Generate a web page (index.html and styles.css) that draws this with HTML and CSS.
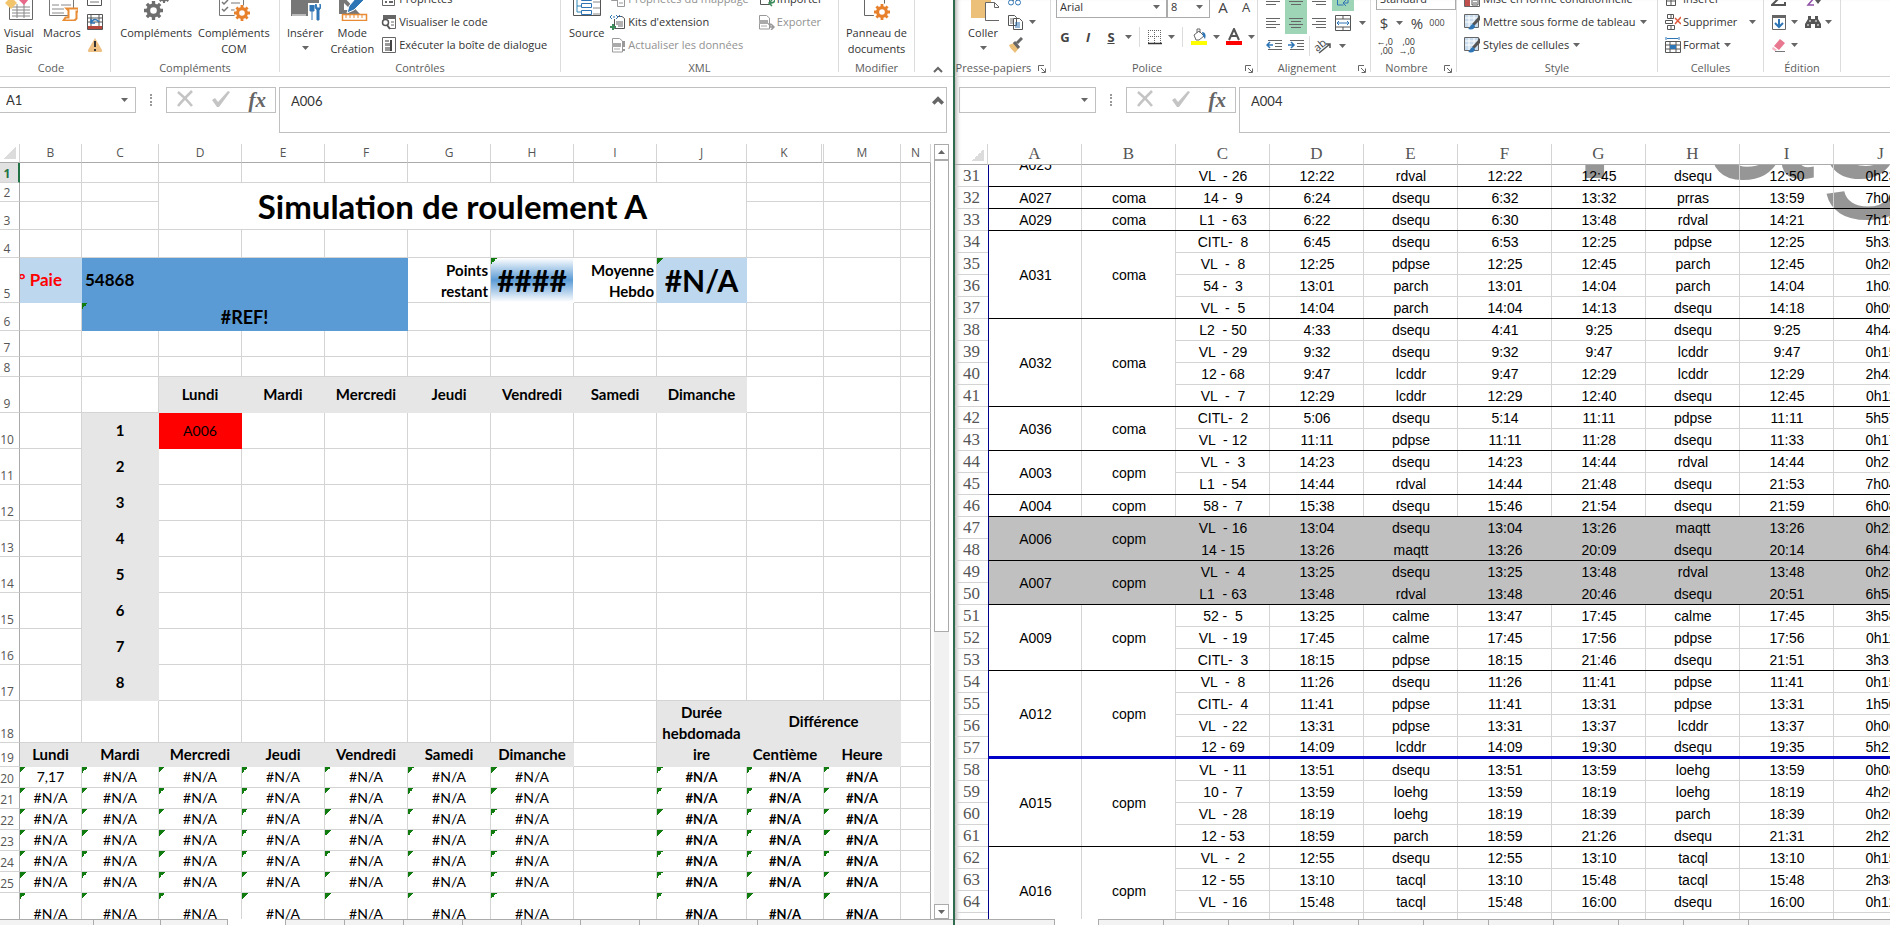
FILE: index.html
```html
<!DOCTYPE html>
<html lang="fr">

<head>
  <meta charset="UTF-8">
  <meta name="viewport" content="width=device-width, initial-scale=1.0">
  <title>Simulation de roulement</title>
  <link rel="stylesheet" href="styles.css">
</head>

<body>
  <svg class="sprite">
    <symbol id="arrow" viewBox="0 0 7 4"><path d="M0 0h7L3.500 4z" fill="#666" /></symbol>
    <symbol id="launcher" viewBox="0 0 8 8"><path d="M.5 6V.5H6M3 3l4 4M7.500 3.500v4h-4" fill="none" stroke="#666" /></symbol>
    <symbol id="cancel" viewBox="0 0 18 18"><path d="M2 2c5 4 10 9 14 14M16 1C11 6 6 11 2 16" fill="none" stroke="#c4c4c4" stroke-width="2.500" /></symbol>
    <symbol id="check" viewBox="0 0 20 18"><path d="M1 10l3-2 3 4L17 1l2 1L8 17H6z" fill="#c4c4c4" /></symbol>
    <symbol id="up" viewBox="0 0 10 7"><path d="M1 6l4-4 4 4" fill="none" stroke="#666" stroke-width="2" /></symbol>
    <symbol id="gear" viewBox="0 0 20 20"><circle cx="10" cy="10" r="5.500" fill="none" stroke="currentColor" stroke-width="4" /><path d="M10 0v4M10 16v4M0 10h4M16 10h4M3 3l3 3M14 14l3 3M17 3l-3 3M6 14l-3 3" stroke="currentColor" stroke-width="3.500" /></symbol>
    <symbol id="lines-left" viewBox="0 0 16 14"><path d="M0 2.500h14M0 5.500h10M0 8.500h14M0 11.500h10" stroke="#666" /></symbol>
    <symbol id="lines-center" viewBox="0 0 16 14"><path d="M1 2.500h14M3 5.500h10M1 8.500h14M3 11.500h10" stroke="#666" /></symbol>
    <symbol id="lines-right" viewBox="0 0 16 14"><path d="M2 2.500h14M6 5.500h10M2 8.500h14M6 11.500h10" stroke="#666" /></symbol>
    <symbol id="xml-doc" viewBox="0 0 16 16"><path d="M2.500 9V1.500h7L12.500 4v11h-10z" fill="#fff" stroke="#999" /><path d="M2 6h9v4H2z" fill="#aaa" /><path d="M4 12h6" stroke="#aaa" /></symbol>
    <symbol id="styles" viewBox="0 0 17 17"><path d="M.5 1.500h14v13H.5z" fill="#c9dced" stroke="#666" /><path d="M1 5h13M1 9h13M5 2v12M10 2v12" stroke="#fff" /><path d="M16 2v5l-6 6-2-2z" fill="#555" /><path d="M9 11l2 2c0 3-3 4-7 3 2-1 2-4 5-5z" fill="#2e75b6" /></symbol>
  </svg>

  <main class="desktop">
    <section class="window window-left">
      <div class="ribbon">
        <div class="group g-code">
          <div class="group-body">
            <button class="big">
              <svg width="32" height="32" viewBox="0 0 32 32"><path d="M6.500 6.500h23v24h-23z" fill="#fff" stroke="#666" /><path d="M9 18h18M9 21h18M9 24h18M9 27h18M14 15v14M21 15v14" stroke="#888" /><path d="M2 14l6-6 6 6-6 6z" fill="#f2c46c" /><path d="M15 10h11l-5 6z" fill="#e8688a" /></svg>
              <span>Visual<br>Basic</span>
            </button>
            <button class="big">
              <svg width="32" height="32" viewBox="0 0 32 32"><path d="M3.500 2.500h24v24h-24z" fill="#fff" stroke="#777" /><path d="M6 16h7M15 16h10M6 20h12M6 24h12" stroke="#888" /><path d="M20.500 19.500h12v3h-2v7l-2 2h-11l2-3h3v-7z" fill="#fff" stroke="#e88b32" stroke-width="2" /></svg>
              <span>Macros<br>&nbsp;</span>
            </button>
            <div class="stack">
              <button class="icon"><svg width="16" height="16" viewBox="0 0 16 16"><path d="M.5.5h14v14H.5z" fill="#fff" stroke="#555" /><path d="M3 11h9M3 6h9" stroke="#777" /></svg></button>
              <button class="icon"><svg width="16" height="16" viewBox="0 0 16 16"><path d="M.5.500h15v15H.5zM4 1v14M1 4h14M1 8h14M12 1v14" fill="#fff" stroke="#555" /><path d="M1 12h14v3H1z" fill="#b5473c" /><path d="M4 9c2-5 6-4 8-1M4 5v4h4" fill="none" stroke="#2e75b6" stroke-width="1.500" /></svg></button>
              <button class="icon"><svg width="16" height="16" viewBox="0 0 16 16"><path d="M8 1l7 12c.5 1 0 2-1 2H2c-1 0-1.500-1-1-2z" fill="#eec083" /><path d="M8 4v6M8 12v2" stroke="#333" stroke-width="2" /></svg></button>
            </div>
          </div>
          <div class="group-label">Code</div>
        </div>

        <div class="group g-addins">
          <div class="group-body">
            <button class="big">
              <svg width="32" height="32" viewBox="0 0 32 32" color="#6e6e6e"><use href="#gear" x="4" y="12" width="19" height="19" /><use href="#gear" x="18" y="2" width="12" height="12" /></svg>
              <span>Compléments<br>&nbsp;</span>
            </button>
            <button class="big">
              <svg width="32" height="32" viewBox="0 0 32 32" color="#e8812c"><path d="M1.500 1.500h24v25h-24z" fill="#fff" stroke="#777" /><path d="M4 13l2 2 4-4M4 20l2 2 4-4" fill="none" stroke="#777" stroke-width="1.500" /><path d="M13 14h9M13 21h5" stroke="#777" /><circle cx="24" cy="24" r="8" fill="#fff" /><use href="#gear" x="16" y="16" width="16" height="16" /></svg>
              <span>Compléments<br>COM</span>
            </button>
          </div>
          <div class="group-label">Compléments</div>
        </div>

        <div class="group g-controls">
          <div class="group-body">
            <button class="big">
              <svg width="32" height="32" viewBox="0 0 32 32"><path d="M2 2h28v25H2z" fill="#777" /><path d="M3 26h14" stroke="#fff" /><path d="M19 14h12v18H19z" fill="#fff" /><path d="M21 16v6h4v-6M23 22v9M27 15c-2 3 0 5 1 6v10h2V21c2-1 2-4 1-6v4h-3z" fill="#2e75b6" stroke="#2e75b6" /></svg>
              <span>Insérer<br><svg class="arrow"><use href="#arrow" /></svg></span>
            </button>
            <button class="big">
              <svg width="32" height="32" viewBox="0 0 32 32"><path d="M3 3v22h21z" fill="#777" /><path d="M8 14v7h7z" fill="#fff" /><path d="M24 4l6 5-12 12-7 3 2-7z" fill="#2e75b6" stroke="#fff" /><path d="M6.500 25.500h24v6h-24z" fill="#fff" stroke="#e88b32" stroke-width="1.500" /><path d="M10 26v3M14 26v3M18 26v3M22 26v3M26 26v3" stroke="#e88b32" /></svg>
              <span>Mode<br>Création</span>
            </button>
            <div class="stack">
              <button class="row"><svg width="16" height="16" viewBox="0 0 16 16"><path d="M1.500 1.500h12v13h-12z" fill="#fff" stroke="#666" /><path d="M4 6h2M8 6h4M4 11h2M8 11h4" stroke="#666" stroke-width="2" /></svg>Propriétés</button>
              <button class="row"><svg width="16" height="16" viewBox="0 0 16 16"><path d="M2.500 6V2.500h12v12H9" fill="#fff" stroke="#666" /><path d="M2 1h13v4H2z" fill="#666" /><path d="M10 8h3M10 11h3" stroke="#666" /><circle cx="4.500" cy="8.500" r="3" fill="#fff" stroke="#555" stroke-width="1.500" /><path d="M6 11l3 4" stroke="#555" stroke-width="2" /></svg>Visualiser le code</button>
              <button class="row"><svg width="16" height="16" viewBox="0 0 16 16"><path d="M1.500.5h13v15h-13z" fill="#fff" stroke="#666" /><path d="M4 3h4v2H4zM4 6h6v3H4zM4 10h6v4H4z" fill="#999" /><path d="M10 3v11" stroke="#444" stroke-width="2" /></svg>Exécuter la boîte de dialogue</button>
            </div>
          </div>
          <div class="group-label">Contrôles</div>
        </div>

        <div class="group g-xml">
          <div class="group-body">
            <button class="big">
              <svg width="32" height="32" viewBox="0 0 32 32"><path d="M2.500 2.500h27v24h-27z" fill="#fff" stroke="#555" /><path d="M22 7h7M22 13h7M22 19h7M22 25h7" stroke="#888" /><path d="M6 3v20h4M6 10h4M6 17h4" fill="none" stroke="#2e86b6" /><path d="M10.500 7.500h10v4h-10zM10.500 14.500h10v4h-10zM10.500 21.500h10v4h-10z" fill="#fff" stroke="#2e75b6" /></svg>
              <span>Source<br>&nbsp;</span>
            </button>
            <div class="stack">
              <button class="row" disabled><svg width="16" height="16" viewBox="0 0 16 16"><path d="M1.500.5h6v9h-6zM7.500 4.500h7v11h-7zM9 8h4M9 12h4" fill="#fff" stroke="#999" /></svg>Propriétés du mappage</button>
              <button class="row"><svg width="16" height="16" viewBox="0 0 16 16"><path d="M4.500 5v9.500h10v-10L12 2.500H8" fill="#fff" stroke="#555" /><path d="M6 8h7M6 10h7M8 12h5" stroke="#666" /><path d="M2 1L0 3l2 2M6 1l2 2-2 2M3 3h2M9 1l2 2" fill="none" stroke="#2e75b6" /><path d="M3 10v6M0 13h6" stroke="#3c8c5c" stroke-width="2" /></svg>Kits d'extension</button>
              <button class="row" disabled><svg width="16" height="16"><use href="#xml-doc" /><path d="M14 4v6M14 12v2" stroke="#999" stroke-width="2" /></svg>Actualiser les données</button>
            </div>
            <div class="stack stack-io">
              <button class="row"><svg width="16" height="16" viewBox="0 0 16 16"><path d="M1.500.5h9v13h-9z" fill="#fff" stroke="#555" /><path d="M1 4h9v5H1z" fill="#2e75b6" /><path d="M16 8c0 4-3 4-6 4m3-3l-3 3 3 3" fill="none" stroke="#3c8c5c" stroke-width="1.500" /></svg>Importer</button>
              <button class="row" disabled><svg width="16" height="16"><use href="#xml-doc" x="-2" /><path d="M9 10h2v3h4m-3-3l3 3-3 3" fill="none" stroke="#999" stroke-width="1.500" /></svg>Exporter</button>
              <span class="row"></span>
            </div>
          </div>
          <div class="group-label">XML</div>
        </div>

        <div class="group g-modify">
          <div class="group-body">
            <button class="big">
              <svg width="32" height="32" viewBox="0 0 32 32" color="#e8812c"><path d="M3.500 2.500h20v24h-20z" fill="#fff" stroke="#666" /><circle cx="21" cy="23" r="9" fill="#fff" /><use href="#gear" x="13" y="15" width="16" height="16" /></svg>
              <span>Panneau de<br>documents</span>
            </button>
          </div>
          <div class="group-label">Modifier</div>
        </div>
        <button class="collapse"><svg width="10" height="7"><use href="#up" /></svg></button>
      </div>

      <div class="formula-bar">
        <div class="name-box"><input type="text" value="A1" aria-label="Zone Nom"><svg class="arrow"><use href="#arrow" /></svg></div>
        <span class="dots"></span>
        <div class="fx-box">
          <button><svg width="18" height="18"><use href="#cancel" /></svg></button>
          <button><svg width="20" height="18"><use href="#check" /></svg></button>
          <button class="fx">fx</button>
        </div>
        <div class="formula"><input type="text" value="A006" aria-label="Barre de formule"><svg width="12" height="9" viewBox="0 0 10 7"><path d="M1 6l4-4 4 4" fill="none" stroke="#666" stroke-width="3" /></svg></div>
      </div>

      <div class="pane">
        <div class="sheet">
          <table class="grid grid-left">
            <colgroup>
              <col class="c-head"><col class="c-b"><col class="c-c"><col class="c-day"><col class="c-day"><col class="c-day"><col class="c-day"><col class="c-day"><col class="c-day"><col class="c-j"><col class="c-c"><col class="c-c"><col class="c-n">
            </colgroup>
            <thead>
              <tr>
                <th class="corner"></th><th>B</th><th>C</th><th>D</th><th>E</th><th>F</th><th>G</th><th>H</th><th>I</th><th>J</th><th class="hidden-next">K</th><th>M</th><th>N</th>
              </tr>
            </thead>
            <tbody>
              <tr class="h20"><th class="active">1</th><td></td><td></td><td></td><td></td><td></td><td></td><td></td><td></td><td></td><td></td><td></td><td></td></tr>
              <tr class="h19"><th>2</th><td></td><td></td><td class="title" colspan="7" rowspan="2">Simulation de roulement A</td><td></td><td></td><td></td></tr>
              <tr class="h28"><th>3</th><td></td><td></td><td></td><td></td><td></td></tr>
              <tr class="h28"><th>4</th><td></td><td></td><td></td><td></td><td></td><td></td><td></td><td></td><td></td><td></td><td></td><td></td></tr>
              <tr class="h45"><th>5</th><td class="pay"><div>N° Paie</div></td><td class="blue pay-number" colspan="4">54868</td><td class="side">Points<br>restant</td><td class="points err">####</td><td class="side">Moyenne<br>Hebdo</td><td class="average err">#N/A</td><td></td><td></td><td></td></tr>
              <tr class="h28"><th>6</th><td></td><td class="blue ref err" colspan="4">#REF!</td><td></td><td></td><td></td><td></td><td></td><td></td><td></td></tr>
              <tr class="h26"><th>7</th><td></td><td></td><td></td><td></td><td></td><td></td><td></td><td></td><td></td><td></td><td></td><td></td></tr>
              <tr class="h20"><th>8</th><td></td><td></td><td></td><td></td><td></td><td></td><td></td><td></td><td></td><td></td><td></td><td></td></tr>
              <tr class="h36"><th>9</th><td></td><td></td><td class="label">Lundi</td><td class="label">Mardi</td><td class="label">Mercredi</td><td class="label">Jeudi</td><td class="label">Vendredi</td><td class="label">Samedi</td><td class="label">Dimanche</td><td></td><td></td><td></td></tr>
            </tbody>
            <tbody id="weeks"></tbody>
            <tbody>
              <tr class="h42"><th>18</th><td></td><td></td><td></td><td></td><td></td><td></td><td></td><td></td><td class="label" rowspan="2">Durée<br>hebdomada<br>ire</td><td class="label" colspan="2">Différence</td><td></td></tr>
              <tr class="h24"><th>19</th><td class="label">Lundi</td><td class="label">Mardi</td><td class="label">Mercredi</td><td class="label">Jeudi</td><td class="label">Vendredi</td><td class="label">Samedi</td><td class="label">Dimanche</td><td></td><td class="label">Centième</td><td class="label">Heure</td><td></td></tr>
            </tbody>
            <tbody id="totals"></tbody>
          </table>
        </div>
        <div class="scrollbar">
          <button class="scroll-up"><svg class="arrow"><use href="#arrow" /></svg></button>
          <div class="thumb"></div>
          <button><svg class="arrow"><use href="#arrow" /></svg></button>
        </div>
      </div>
      <div class="tabs tabs-left">
        <span class="first"></span><span></span><span></span><span class="current"></span><span></span><span></span><span></span><span></span><span></span><span></span><span></span><span></span>
      </div>
    </section>

    <section class="window window-right">
      <div class="ribbon">
        <div class="group g-clipboard">
          <div class="group-body">
            <button class="big">
              <svg width="32" height="32" viewBox="0 0 32 32"><path d="M4 2h20v27H4z" fill="#edc079" /><path d="M18.500 13.500h9l5 5v13h-14z" fill="#fff" stroke="#666" /><path d="M27.500 13.500v5h5" fill="none" stroke="#666" /></svg>
              <span>Coller<br><svg class="arrow"><use href="#arrow" /></svg></span>
            </button>
            <div class="stack">
              <button class="icon"><svg width="16" height="16" viewBox="0 0 16 16"><path d="M5 0l5 10M11 0L6 10" stroke="#555" /><circle cx="4" cy="11.500" r="2.500" fill="none" stroke="#2e75b6" /><circle cx="11" cy="11.500" r="2.500" fill="none" stroke="#2e75b6" /></svg></button>
              <button class="icon"><svg width="16" height="16" viewBox="0 0 16 16"><path d="M1.500 1.500h6l2 2v8h-8zM6.500 4.500h6l3 3v8h-9z" fill="#fff" stroke="#555" /><path d="M3 5h3M3 7h3M3 9h3" stroke="#777" /><path d="M8 9h5M8 11h5M8 13h5" stroke="#2e75b6" /></svg><svg class="arrow"><use href="#arrow" /></svg></button>
              <button class="icon"><svg width="16" height="16" viewBox="0 0 16 16"><path d="M2 8l5-2 5 5-4 5C6 13 4 13 2 8z" fill="#edc079" /><path d="M15 1l-5 5M7 5l5 6" stroke="#666" stroke-width="3" /></svg></button>
            </div>
          </div>
          <div class="group-label">Presse-papiers<svg class="launcher"><use href="#launcher" /></svg></div>
        </div>

        <div class="group g-font">
          <div class="group-body lines">
            <div class="line">
              <label class="combo combo-font"><select aria-label="Police"><option>Arial</option></select><svg class="arrow"><use href="#arrow" /></svg></label>
              <label class="combo combo-size"><select aria-label="Taille"><option>8</option></select><svg class="arrow"><use href="#arrow" /></svg></label>
              <button class="letter grow">A</button>
              <button class="letter shrink">A</button>
            </div>
            <div class="line line-style">
              <button class="letter wide"><b>G</b></button>
              <button class="letter wide"><b><em>I</em></b></button>
              <button class="letter wide"><b><u>S</u></b></button>
              <svg class="arrow"><use href="#arrow" /></svg>
              <i class="sep"></i>
              <button class="tool"><svg width="16" height="16" viewBox="0 0 16 16"><path d="M1 1.500h13M1 7.500h13M1.500 1v13M7.500 1v13M13.500 1v13" stroke="#666" stroke-dasharray="1 1" /><path d="M1 14.500h14" stroke="#333" stroke-width="1.500" /></svg></button>
              <svg class="arrow"><use href="#arrow" /></svg>
              <i class="sep"></i>
              <button class="tool"><svg width="18" height="18" viewBox="0 0 18 18"><path d="M4 7l5-4 5 5-5 4H6z" fill="#fff" stroke="#666" /><path d="M7 5V1h3v4" fill="none" stroke="#666" /><path d="M12 4c4 0 4 4 3 7l-2-3z" fill="#2e75b6" /><path d="M1 13h16v4H1z" fill="#ff0" /></svg></button>
              <svg class="arrow"><use href="#arrow" /></svg>
              <button class="tool"><svg width="18" height="18" viewBox="0 0 18 18"><path d="M4 12l5-11 5 11M6 8h6" fill="none" stroke="#555" stroke-width="2" /><path d="M1 13h16v4H1z" fill="red" /></svg></button>
              <svg class="arrow"><use href="#arrow" /></svg>
            </div>
          </div>
          <div class="group-label">Police<svg class="launcher"><use href="#launcher" /></svg></div>
        </div>

        <div class="group g-align">
          <div class="group-body lines">
            <div class="line">
              <button class="tool"><svg width="16" height="14"><use href="#lines-left" /></svg></button>
              <button class="tool on"><svg width="16" height="14"><use href="#lines-center" /></svg></button>
              <button class="tool"><svg width="16" height="14"><use href="#lines-right" /></svg></button>
              <button class="tool on wrap"><svg width="16" height="16" viewBox="0 0 16 16"><path d="M2.500 1v12h6M2 6h8M13 5v6H8m3-3l-3 3 3 3" fill="none" stroke="#2e75b6" /></svg></button>
            </div>
            <div class="line">
              <button class="tool"><svg width="16" height="14"><use href="#lines-left" /></svg></button>
              <button class="tool on"><svg width="16" height="14"><use href="#lines-center" /></svg></button>
              <button class="tool"><svg width="16" height="14"><use href="#lines-right" /></svg></button>
              <button class="tool wrap"><svg width="16" height="16" viewBox="0 0 16 16"><path d="M.5.500h15v15H.5zM.5 4h15M.5 12h15M8 1v3M8 12v4" fill="#fff" stroke="#555" /><path d="M2 8h12M4 6L2 8l2 2M12 6l2 2-2 2" fill="none" stroke="#2e75b6" /></svg></button>
              <svg class="arrow"><use href="#arrow" /></svg>
            </div>
            <div class="line">
              <button class="tool"><svg width="16" height="14" viewBox="0 0 16 14"><path d="M2 1.500h14M9 4.500h7M9 7.500h7M2 10.500h14" stroke="#666" /><path d="M7 6H1m3-3L1 6l3 3" fill="none" stroke="#2e75b6" stroke-width="1.500" /></svg></button>
              <button class="tool"><svg width="16" height="14" viewBox="0 0 16 14"><path d="M2 1.500h14M9 4.500h7M9 7.500h7M2 10.500h14" stroke="#666" /><path d="M0 6h6M3 3l3 3-3 3" fill="none" stroke="#2e75b6" stroke-width="1.500" /></svg></button>
              <i class="sep"></i>
              <button class="tool"><svg width="18" height="16" viewBox="0 0 18 16"><path d="M5 15L16 6m-4 0h4v4" fill="none" stroke="#555" stroke-width="1.500" /><text x="0" y="11" font-size="11" fill="#444" transform="rotate(-40 6 8)">ab</text></svg></button>
              <svg class="arrow"><use href="#arrow" /></svg>
            </div>
          </div>
          <div class="group-label">Alignement<svg class="launcher"><use href="#launcher" /></svg></div>
        </div>

        <div class="group g-number">
          <div class="group-body lines">
            <div class="line">
              <label class="combo combo-format"><select aria-label="Format de nombre"><option>Standard</option></select></label>
            </div>
            <div class="line">
              <button class="letter sign">$</button><svg class="arrow"><use href="#arrow" /></svg>
              <button class="letter sign">%</button>
              <button class="letter thousand">000</button>
            </div>
            <div class="line line-decimals">
              <button class="decimals"><span>←,0</span><span>,00</span></button>
              <button class="decimals"><span>,00</span><span>→,0</span></button>
            </div>
          </div>
          <div class="group-label">Nombre<svg class="launcher"><use href="#launcher" /></svg></div>
        </div>

        <div class="group g-style">
          <div class="group-body">
            <div class="stack">
              <button class="row"><svg width="17" height="16" viewBox="0 0 17 16"><path d="M.5.5h15v15H.5z" fill="#fff" stroke="#666" /><path d="M1 3h5v12H1z" fill="#c0504d" /><path d="M8 6h6v8H8z" fill="#fff" stroke="#555" /><path d="M9 9h4M9 12h4" stroke="#555" /></svg>Mise en forme conditionnelle</button>
              <button class="row"><svg width="17" height="17"><use href="#styles" /></svg>Mettre sous forme de tableau<svg class="arrow"><use href="#arrow" /></svg></button>
              <button class="row"><svg width="17" height="17"><use href="#styles" /></svg>Styles de cellules<svg class="arrow"><use href="#arrow" /></svg></button>
            </div>
          </div>
          <div class="group-label">Style</div>
        </div>

        <div class="group g-cells">
          <div class="group-body">
            <div class="stack">
              <button class="row"><svg width="16" height="16" viewBox="0 0 16 16"><path d="M1.500 1.500h9v13h-9zM6 2v12M2 6h8M2 10h8" fill="none" stroke="#555" /></svg>Insérer</button>
              <button class="row"><svg width="16" height="16" viewBox="0 0 16 16"><path d="M2.500.5h6v4h-6zM.5 6.500h7v3h-7zM2.500 11.500h7v4h-7zM6 1v3M6 12v3" fill="none" stroke="#555" /><path d="M10 4l6 6M16 3l-6 7" stroke="#e0583c" stroke-width="1.500" /></svg>Supprimer<svg class="arrow arrow-far"><use href="#arrow" /></svg></button>
              <button class="row"><svg width="16" height="16" viewBox="0 0 16 16"><path d="M2 1.500h11M1 0v3M14 0v3" stroke="#2e75b6" /><path d="M.5 4.500h15v11H.5zM5 5v10M11 5v10M1 8h14M1 12h14" fill="#fff" stroke="#555" /><path d="M5 8h6v4H5z" fill="#2e75b6" /></svg>Format<svg class="arrow"><use href="#arrow" /></svg></button>
            </div>
          </div>
          <div class="group-label">Cellules</div>
        </div>

        <div class="group g-edit">
          <div class="group-body">
            <div class="stack">
              <button class="row"><svg width="16" height="16" viewBox="0 0 16 16"><path d="M14 3V1H1l7 6-7 7h13v-3" fill="none" stroke="#555" stroke-width="2" /></svg></button>
              <button class="row"><svg width="16" height="16" viewBox="0 0 16 16"><path d="M1.500 1.500h13v14h-13z" fill="#fff" stroke="#666" /><path d="M1 1h14v3H1z" fill="#666" /><path d="M8 5v8M4 9l4 4 4-4" fill="none" stroke="#2e75b6" stroke-width="2" /></svg><svg class="arrow"><use href="#arrow" /></svg></button>
              <button class="row"><svg width="16" height="16" viewBox="0 0 16 16"><path d="M9 2l5 4-6 7-5-4z" fill="#e8788f" /><path d="M2 10l4 3-2 1-3-2z" fill="#f3b3c0" /><path d="M4 14.500h10" stroke="#777" /></svg><svg class="arrow"><use href="#arrow" /></svg></button>
            </div>
            <div class="stack">
              <button class="row"><svg width="16" height="16" viewBox="0 0 16 16"><path d="M3 7h6l-6 7h6" fill="none" stroke="#8e4fa8" stroke-width="1.500" /><path d="M10 9h6l-3 4z" fill="#555" /></svg></button>
              <button class="row"><svg width="16" height="16" viewBox="0 0 16 16"><path d="M3 2h3v3h4V2h3v3l3 5v4h-6v-4H6v4H0v-4l3-5z" fill="#555" /><path d="M2 11h2M12 11h2M5 6v2M11 6v2" stroke="#fff" /></svg><svg class="arrow"><use href="#arrow" /></svg></button>
              <span class="row"></span>
            </div>
          </div>
          <div class="group-label">Édition</div>
        </div>
      </div>

      <div class="formula-bar">
        <div class="name-box"><input type="text" value="" aria-label="Zone Nom"><svg class="arrow"><use href="#arrow" /></svg></div>
        <span class="dots"></span>
        <div class="fx-box">
          <button><svg width="18" height="18"><use href="#cancel" /></svg></button>
          <button><svg width="20" height="18"><use href="#check" /></svg></button>
          <button class="fx">fx</button>
        </div>
        <div class="formula"><input type="text" value="A004" aria-label="Barre de formule"></div>
      </div>

      <div class="pane">
        <div class="sheet">
          <div class="page-mark"><span>Page</span></div>
          <table class="grid grid-right">
            <colgroup>
              <col class="c-head"><col span="10" class="c-cell">
            </colgroup>
            <thead>
              <tr>
                <th class="corner"></th><th>A</th><th>B</th><th>C</th><th>D</th><th>E</th><th>F</th><th>G</th><th>H</th><th>I</th><th>J</th>
              </tr>
            </thead>
            <tbody id="services"></tbody>
          </table>
        </div>
      </div>
      <div class="tabs tabs-right">
        <span class="first"></span><span class="current"></span><span></span><span></span><span></span><span></span><span></span><span></span><span></span><span></span><span></span><span></span>
      </div>
    </section>
  </main>
  <script src="script.js"></script>
</body>

</html>
```
FILE: styles.css
```css
* {
  margin: 0;
  padding: 0;
  box-sizing: border-box;
}

html,
body {
  width: 100%;
  height: 100%;
  overflow: hidden;
}

body {
  font-family: "Open Sans", "Noto Sans", sans-serif;
  font-size: 11px;
  color: #333;
  background: #fff;
}

button,
input,
select {
  font: inherit;
  color: inherit;
  background: none;
  border: none;
  outline: none;
  appearance: none;
}

svg {
  flex: none;
}

.sprite {
  position: absolute;
  width: 0;
  height: 0;
}

.arrow {
  width: 7px;
  height: 4px;
}

.desktop {
  display: grid;
  grid-template-columns: 955fr 935fr;
  height: 100%;
}

.window {
  display: flex;
  flex-direction: column;
  min-width: 0;
  height: 100%;
  overflow: hidden;
}

.window-left {
  border-right: 2px solid #2f6b4c;
}

.window-right {
  box-shadow: inset 5px 0 5px -4px #999;
}

/* ribbon */
.ribbon {
  display: flex;
  flex: none;
  height: 77px;
  border-bottom: 1px solid #d2d2d2;
  overflow: hidden;
}

.group {
  display: flex;
  flex: none;
  flex-direction: column;
  justify-content: flex-end;
  height: 72px;
  border-right: 1px solid #dcdcdc;
}

.group-body {
  display: flex;
  flex: none;
  align-items: flex-end;
}

.group-label {
  position: relative;
  flex: none;
  height: 15px;
  line-height: 22px;
  text-align: center;
  color: #5c5c5c;
}

.launcher {
  position: absolute;
  right: 4px;
  top: 8px;
  width: 8px;
  height: 8px;
}

.big {
  display: flex;
  flex-direction: column;
  align-items: center;
  gap: 4px;
  line-height: 16px;
  white-space: nowrap;
}

.big .arrow {
  vertical-align: 3px;
}

.stack {
  display: flex;
  flex-direction: column;
  padding-bottom: 1px;
}

.row,
.icon {
  display: flex;
  align-items: center;
  height: 23px;
  gap: 2px;
  white-space: nowrap;
}

.row:disabled {
  color: #929292;
}

.row .arrow {
  margin-left: 2px;
}

.row .arrow-far {
  margin-left: 10px;
}

.g-code {
  width: 111px;
}

.g-code .group-body {
  gap: 8px;
  padding-left: 3px;
}

.g-code .stack {
  margin-left: -2px;
}

.g-code .group-label {
  padding-right: 8px;
}

.g-addins {
  width: 169px;
}

.g-addins .group-body {
  gap: 6px;
  justify-content: center;
}

.g-controls {
  width: 281px;
}

.g-controls .group-body {
  gap: 7px;
  padding-left: 7px;
}

.g-xml {
  width: 278px;
}

.g-xml .group-body {
  gap: 6px;
  padding-left: 8px;
}

.g-xml .stack-io {
  margin-left: 4px;
}

.g-modify {
  width: 76px;
}

.g-modify .group-body {
  justify-content: center;
}

.collapse {
  margin: 60px 0 0 18px;
  height: 16px;
}

.g-clipboard {
  width: 96px;
}

.g-clipboard .group-body {
  gap: 8px;
  padding-left: 12px;
}

.g-clipboard .icon {
  gap: 6px;
}

.g-clipboard .group-label {
  padding-right: 18px;
}

.g-font {
  width: 207px;
}

.g-align {
  width: 113px;
}

.g-number {
  width: 86px;
}

.g-font .group-label,
.g-align .group-label,
.g-number .group-label {
  padding-right: 14px;
}

.g-style {
  width: 201px;
}

.g-cells {
  width: 106px;
}

.g-edit {
  width: 77px;
}

.g-style .group-body,
.g-cells .group-body,
.g-edit .group-body {
  padding-left: 7px;
}

.g-edit .group-body {
  gap: 7px;
}

.lines {
  flex-direction: column;
  align-items: flex-start;
  padding-left: 5px;
}

.line {
  display: flex;
  align-items: center;
  height: 23px;
}

.g-font .line:first-child {
  margin-bottom: 7px;
}

.line-style {
  gap: 5px;
  margin-bottom: 9px;
}

.combo {
  display: flex;
  align-items: center;
  height: 23px;
  padding: 0 6px 0 3px;
  border: 1px solid #ababab;
}

.combo select {
  flex: 1;
  min-width: 0;
}

.combo-font {
  width: 111px;
}

.combo-size {
  width: 43px;
}

.combo-format {
  width: 80px;
  margin-bottom: 2px;
}

.letter {
  width: 16px;
  font-size: 13px;
  color: #444;
}

.wide {
  width: 18px;
}

.grow {
  width: 26px;
  font-size: 15px;
}

.shrink {
  width: 20px;
}

.sep {
  width: 1px;
  height: 20px;
  margin: 0 2px;
  background: #dcdcdc;
}

.tool {
  display: flex;
  align-items: center;
  justify-content: center;
  height: 23px;
}

.g-align .tool {
  width: 22px;
}

.g-align .on {
  background: #9fd5b7;
}

.g-align .wrap {
  margin-left: 3px;
}

.g-align .arrow {
  margin-left: 5px;
}

.g-number .arrow {
  margin: 0 6px 0 4px;
}

.sign {
  font-size: 15px;
}

.thousand {
  width: 24px;
  font-size: 9px;
}

.line-decimals {
  gap: 5px;
}

.decimals {
  display: flex;
  flex-direction: column;
  align-items: flex-end;
  width: 17px;
  font-size: 9px;
  line-height: 9px;
}

/* formula bar */
.formula-bar {
  display: flex;
  flex: none;
  align-items: flex-start;
  height: 67px;
  padding-top: 10px;
  font-family: Lato, sans-serif;
  font-size: 13px;
}

.name-box {
  display: flex;
  align-items: center;
  width: 136px;
  height: 26px;
  padding: 0 7px 0 6px;
  border: 1px solid #c0c0c0;
}

.window-left .name-box {
  border-left: none;
}

.window-right .name-box {
  width: 137px;
  margin-left: 4px;
}

.name-box input,
.formula input {
  flex: 1;
  min-width: 0;
  height: 25px;
}

.dots {
  width: 2px;
  height: 12px;
  margin: 7px 14px 0;
  border-right: 2px dotted #999;
}

.fx-box {
  display: flex;
  align-items: center;
  justify-content: space-between;
  width: 110px;
  height: 26px;
  padding: 0 9px;
  border: 1px solid #c0c0c0;
}

.fx {
  font: italic bold 21px/20px "Liberation Serif", serif;
  color: #666;
}

.formula {
  display: flex;
  flex: 1;
  align-items: flex-start;
  min-width: 0;
  height: 46px;
  margin: 0 6px 0 3px;
  padding: 0 2px 0 11px;
  border: 1px solid #c0c0c0;
}

.formula svg {
  margin-top: 8px;
}

.window-right .formula {
  margin-right: 0;
  border-right: none;
}

/* sheets */
.pane {
  display: flex;
  flex: 1;
  min-height: 0;
}

.sheet {
  position: relative;
  min-width: 0;
  overflow: hidden;
}

.grid {
  position: relative;
  table-layout: fixed;
  border-collapse: separate;
  border-spacing: 0;
}

.grid td {
  border-right: 1px solid #d4d4d4;
  border-bottom: 1px solid #d4d4d4;
  text-align: center;
  vertical-align: middle;
  white-space: nowrap;
}

.grid th {
  font-weight: normal;
  color: #555;
  border-bottom: 1px solid #d4d4d4;
}

.grid thead th {
  border-right: 1px solid #d4d4d4;
  border-bottom: 1px solid #ababab;
}

.grid thead .corner {
  background: linear-gradient(to bottom right, transparent 50%, #dcdcdc 50%) no-repeat right 3px bottom 3px / 12px 12px;
}

.grid-left {
  width: 931px;
  font: 14px/20px Lato, sans-serif;
  color: #000;
}

.grid-left .c-head { width: 20px; }
.grid-left .c-b { width: 62px; }
.grid-left .c-c { width: 77px; }
.grid-left .c-day { width: 83px; }
.grid-left .c-j { width: 90px; }
.grid-left .c-n { width: 30px; }

.grid-left thead th {
  height: 19px;
}

.grid-left th {
  font: 12px/16px "Open Sans", sans-serif;
}

.grid-left tbody th {
  padding-right: 5px;
  border-right: 1px solid #ababab;
  vertical-align: bottom;
}

.grid-left td:last-child {
  border-right-color: #ababab;
}

.grid-left thead .hidden-next {
  border-right: 3px double #d4d4d4;
}

.grid-left tbody .active {
  padding-right: 4px;
  font-weight: bold;
  color: #217346;
  background: #e1e1e1;
  border-right: 2px solid #217346;
}

.h19 { height: 19px; }
.h20 { height: 20px; }
.h21 { height: 21px; }
.h24 { height: 24px; }
.h26 { height: 26px; }
.h28 { height: 28px; }
.h36 { height: 36px; }
.h42 { height: 42px; }
.h45 { height: 45px; }

.grid-left .title {
  font-size: 33px;
  line-height: 40px;
  font-weight: bold;
}

.grid-left .pay {
  background: #bdd7ee;
  border-color: #bdd7ee;
}

.pay div {
  display: flex;
  justify-content: flex-end;
  padding-right: 19px;
  overflow: hidden;
  font-size: 17px;
  font-weight: bold;
  color: red;
}

.grid-left .blue {
  background-color: #5b9bd5;
  border-color: #5b9bd5;
  font-weight: bold;
}

.grid-left .pay-number {
  padding-left: 3px;
  font-size: 17px;
  text-align: left;
}

.grid-left .ref {
  font-size: 18px;
}

.grid-left .side {
  padding: 2px 2px 0 0;
  font-size: 15px;
  line-height: 21px;
  font-weight: bold;
  text-align: right;
}

.grid-left .points,
.grid-left .average {
  font-size: 30px;
  line-height: 40px;
  font-weight: bold;
}

.grid-left .points {
  background-image: linear-gradient(to bottom right, #107c10 50%, transparent 50%), linear-gradient(#fff, #5b9bd5 50%, #fff);
  background-size: 6px 6px, auto;
  border-color: transparent;
}

.grid-left .average {
  background-color: #bdd7ee;
  border-color: #bdd7ee;
}

.grid-left .label {
  font-size: 15px;
  line-height: 21px;
  font-weight: bold;
  background: #e7e6e6;
  border-color: #e7e6e6;
}

.grid-left .conflict {
  background: red;
  border-color: red;
}

.grid-left .sum {
  font-size: 13px;
  font-weight: bold;
}

/* small green corner on cells holding an error */
.err {
  background-image: linear-gradient(to bottom right, #107c10 50%, transparent 50%);
  background-repeat: no-repeat;
  background-size: 6px 6px;
}

.grid-right {
  width: 973px;
  font: 14px/16px "Liberation Sans", sans-serif;
  color: #000;
}

.grid-right .c-head { width: 33px; }
.grid-right .c-cell { width: 94px; }

.grid-right th {
  font: 17px/20px "Liberation Serif", serif;
}

.grid-right thead th {
  height: 21px;
}

.grid-right tbody tr {
  height: 22px;
}

/* column lines are backgrounds here, so the black row lines stay unbroken */
.grid-right td {
  border-right: none;
  background: linear-gradient(#d4d4d4, #d4d4d4) no-repeat right / 1px 100%;
  white-space: pre;
}

.grid-right .code {
  border-left: 1px solid #00008b;
}

.grid-right .last {
  border-bottom-color: #000;
}

.grid-right .thick {
  border-bottom: 3px solid #0000c8;
}

.grid-right .picked {
  background: #c0c0c0;
}

.grid-right .picked:not(.last) {
  border-bottom-color: #c0c0c0;
}

.grid-right .cut {
  vertical-align: top;
}

.cut div {
  display: flex;
  align-items: flex-end;
  justify-content: center;
  height: 8px;
  overflow: hidden;
}

/* page number mark lying behind the cells */
.page-mark {
  position: absolute;
  inset: 21px 0 0 0;
  overflow: hidden;
}

.page-mark span {
  position: absolute;
  left: 614px;
  bottom: calc(100% - 56px);
  font: 200px/224px "Liberation Sans", sans-serif;
  color: #969696;
}

.scrollbar {
  display: flex;
  flex-direction: column;
  width: 15px;
  margin-left: 3px;
  background: #f1f1f1;
}

.scrollbar button {
  display: flex;
  align-items: center;
  justify-content: center;
  height: 15px;
  border: 1px solid #ababab;
  background: #fff;
}

.scrollbar .scroll-up {
  height: 16px;
}

.scroll-up .arrow {
  transform: rotate(180deg);
}

.scrollbar .thumb {
  flex: 473 0 0;
  border: 1px solid #ababab;
  background: #fff;
}

.scrollbar .thumb + button {
  margin-top: 272px;
}

.tabs {
  display: flex;
  flex: none;
  height: 6px;
  border-top: 1px solid #ababab;
  background: #f3f3f3;
}

.tabs span {
  flex: none;
  width: 59px;
  border-right: 1px solid #ababab;
}

.tabs-left .first {
  width: 94px;
}

.tabs-left span:nth-child(2),
.tabs-left span:nth-child(3) {
  width: 67px;
}

.tabs-right .first {
  width: 100px;
}

.tabs-right span {
  width: 65px;
}

.tabs .current {
  width: 58px;
  margin-top: -1px;
  background: #fff;
}

.tabs-right .current {
  width: 44px;
}
```
FILE: script.js
```js
// weeks 1 to 8 of the rotation (rows 10 to 17)
let weeks = document.getElementById("weeks");
for (let i = 1; i <= 8; i++) {
  let cells = i === 1 ? '<td class="conflict">A006</td>' : "<td></td>";
  weeks.innerHTML += `<tr class="h36"><th>${i + 9}</th><td></td><td class="label">${i}</td>${cells}${"<td></td>".repeat(9)}</tr>`;
}

// computed hours (rows 20 to 26)
let totals = document.getElementById("totals");
for (let i = 20; i <= 26; i++) {
  let first = i === 20 ? "7,17" : "#N/A";
  totals.innerHTML += `<tr class="${i === 26 ? "h42" : "h21"}"><th>${i === 26 ? "" : i}</th><td class="err">${first}</td>` +
    '<td class="err">#N/A</td>'.repeat(6) + "<td></td>" + '<td class="err sum">#N/A</td>'.repeat(3) + "<td></td></tr>";
}

// one entry per service: code, type, rows, class
const services = [
  ["A025", "", ["VL  - 26|12:22|rdval|12:22|12:45|dsequ|12:50|0h23"], "first"],
  ["A027", "coma", ["14 -  9|6:24|dsequ|6:32|13:32|prras|13:59|7h00"]],
  ["A029", "coma", ["L1  - 63|6:22|dsequ|6:30|13:48|rdval|14:21|7h18"]],
  ["A031", "coma", ["CITL-  8|6:45|dsequ|6:53|12:25|pdpse|12:25|5h32", "VL  -  8|12:25|pdpse|12:25|12:45|parch|12:45|0h20", "54 -  3|13:01|parch|13:01|14:04|parch|14:04|1h03", "VL  -  5|14:04|parch|14:04|14:13|dsequ|14:18|0h09"]],
  ["A032", "coma", ["L2  - 50|4:33|dsequ|4:41|9:25|dsequ|9:25|4h44", "VL  - 29|9:32|dsequ|9:32|9:47|lcddr|9:47|0h15", "12 - 68|9:47|lcddr|9:47|12:29|lcddr|12:29|2h42", "VL  -  7|12:29|lcddr|12:29|12:40|dsequ|12:45|0h11"]],
  ["A036", "coma", ["CITL-  2|5:06|dsequ|5:14|11:11|pdpse|11:11|5h57", "VL  - 12|11:11|pdpse|11:11|11:28|dsequ|11:33|0h17"]],
  ["A003", "copm", ["VL  -  3|14:23|dsequ|14:23|14:44|rdval|14:44|0h21", "L1  - 54|14:44|rdval|14:44|21:48|dsequ|21:53|7h04"]],
  ["A004", "copm", ["58 -  7|15:38|dsequ|15:46|21:54|dsequ|21:59|6h08"]],
  ["A006", "copm", ["VL  - 16|13:04|dsequ|13:04|13:26|maqtt|13:26|0h22", "14 - 15|13:26|maqtt|13:26|20:09|dsequ|20:14|6h43"], "picked"],
  ["A007", "copm", ["VL  -  4|13:25|dsequ|13:25|13:48|rdval|13:48|0h23", "L1  - 63|13:48|rdval|13:48|20:46|dsequ|20:51|6h58"], "picked"],
  ["A009", "copm", ["52 -  5|13:25|calme|13:47|17:45|calme|17:45|3h58", "VL  - 19|17:45|calme|17:45|17:56|pdpse|17:56|0h11", "CITL-  3|18:15|pdpse|18:15|21:46|dsequ|21:51|3h31"]],
  ["A012", "copm", ["VL  -  8|11:26|dsequ|11:26|11:41|pdpse|11:41|0h15", "CITL-  4|11:41|pdpse|11:41|13:31|pdpse|13:31|1h50", "VL  - 22|13:31|pdpse|13:31|13:37|lcddr|13:37|0h06", "12 - 69|14:09|lcddr|14:09|19:30|dsequ|19:35|5h21"], "thick"],
  ["A015", "copm", ["VL  - 11|13:51|dsequ|13:51|13:59|loehg|13:59|0h08", "10 -  7|13:59|loehg|13:59|18:19|loehg|18:19|4h20", "VL  - 28|18:19|loehg|18:19|18:39|parch|18:39|0h20", "12 - 53|18:59|parch|18:59|21:26|dsequ|21:31|2h27"]],
  ["A016", "copm", ["VL  -  2|12:55|dsequ|12:55|13:10|tacql|13:10|0h15", "12 - 55|13:10|tacql|13:10|15:48|tacql|15:48|2h38", "VL  - 16|15:48|tacql|15:48|16:00|dsequ|16:00|0h12", "|||||||"]]
];

let line = 31;
let html = "";
services.forEach(([code, type, rows, mode = ""]) => {
  let fill = mode === "picked" ? " picked" : "";
  let end = mode === "thick" ? " last thick" : " last";
  rows.forEach((row, i) => {
    html += `<tr><th>${line > 64 ? "" : line}</th>`;
    if (i === 0) {
      html += mode === "first"
        ? `<td class="code cut last"><div>${code}</div></td>`
        : `<td class="code${fill}${end}" rowspan="${rows.length}">${code}</td>`;
      html += `<td class="${fill}${end}" rowspan="${rows.length}">${type}</td>`;
    }
    let last = i === rows.length - 1 ? end : "";
    row.split("|").forEach(text => {
      html += `<td class="${fill}${last}">${text}</td>`;
    });
    html += "</tr>";
    line++;
  });
});
document.getElementById("services").innerHTML = html;
```
